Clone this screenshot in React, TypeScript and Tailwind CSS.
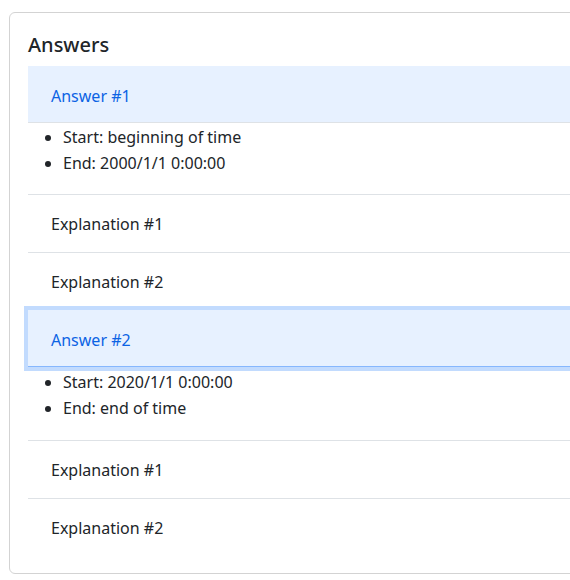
const answers = [
  { title: "Answer #1", start: "beginning of time", end: "2000/1/1 0:00:00", focused: false },
  { title: "Answer #2", start: "2020/1/1 0:00:00", end: "end of time", focused: true },
];

const AnswerBlock = ({ title, start, end, focused }: { title: string; start: string; end: string; focused: boolean }) => {
  return (
    <div>
      <div
        className={
          "h-[57px] flex items-center pl-[23px] pt-[3px] bg-[#e7f1ff] text-[#0c63e4] border-b " +
          (focused ? "border-[#86b7fe] shadow-[0_0_0_4px_rgba(13,110,253,0.25)] relative z-10" : "border-[#dee2e6]")
        }
      >
        {title}
      </div>
      <ul className={"list-disc pl-[35px] leading-[26px] " + (focused ? "pt-[2px] pb-[19px]" : "pt-px pb-[18px]")}>
        <li>Start: {start}</li>
        <li>End: {end}</li>
      </ul>
      <div className="h-[58px] flex items-center pl-[23px] pt-px border-t border-[#dee2e6]">Explanation #1</div>
      <div className="h-[58px] flex items-center pl-[23px] border-t border-[#dee2e6]">Explanation #2</div>
    </div>
  );
};

export default function App() {
  return (
    <div className="w-[570px] h-[580px] overflow-hidden bg-white text-[16px] text-[#212529] font-['Segoe_UI','Noto_Sans',sans-serif]">
      <div className="ml-[9px] mt-[12px] w-[600px] border border-[#d3d3d3] rounded-[6px] pt-[20px] pl-[18px] pb-[17px]">
        <h5 className="text-[20px] font-medium leading-[24px] mb-[9px]">Answers</h5>
        {answers.map((a) => (
          <AnswerBlock key={a.title} {...a} />
        ))}
      </div>
    </div>
  );
}
